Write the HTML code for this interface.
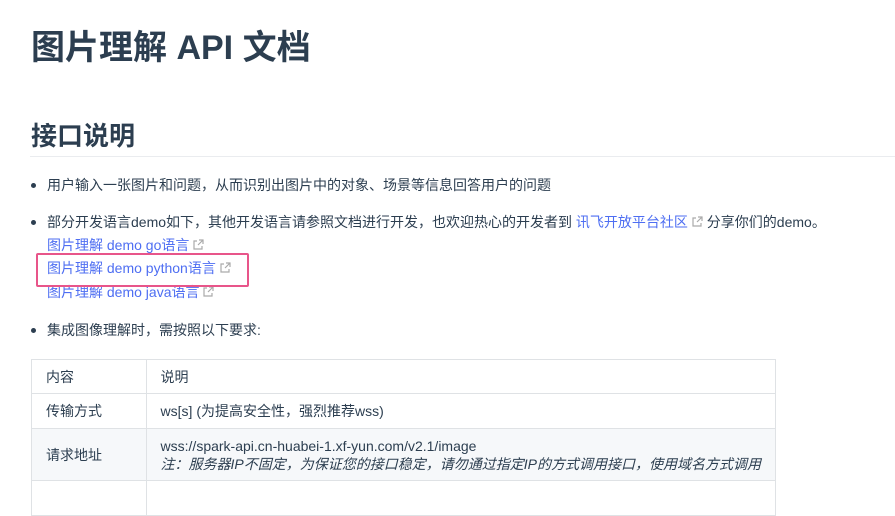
<!DOCTYPE html>
<html><head><meta charset="utf-8"><style>
body{margin:0;background:#fff;font-family:"Liberation Sans","Noto Sans CJK SC",sans-serif;color:#2c3e50;width:895px;height:487px;overflow:hidden;position:relative}
.a{position:absolute;white-space:nowrap}
h1{position:absolute;left:31px;top:26px;margin:0;font-size:34px;line-height:44px;font-weight:700}
h2{position:absolute;left:31px;top:118px;margin:0;font-size:26px;line-height:36px;font-weight:700}
.hr{position:absolute;left:30px;top:156px;width:865px;height:1px;background:#eaecef}
.t{font-size:14px;line-height:20px;color:#2c3e50}
.dot{position:absolute;width:5px;height:5px;border-radius:50%;background:#2c3e50}
.l{color:#4e6ef2}
.ext{display:inline-block;width:12px;height:12px;margin-left:3px;vertical-align:-1px}
table{position:absolute;left:31px;top:359px;border-collapse:collapse;width:745px;font-size:14px}
td{border:1px solid #dfe2e5;padding:0 14px;vertical-align:middle;color:#2c3e50;white-space:nowrap}
</style></head><body>
<svg width="0" height="0" style="position:absolute"><symbol id="e" viewBox="0 0 12 12"><path d="M5 2H2v8h8V7" fill="none" stroke="#aaa" stroke-width="1.2"/><path d="M7 1h4v4M11 1L6 6" fill="none" stroke="#aaa" stroke-width="1.2"/></symbol></svg>
<h1>图片理解 API 文档</h1>
<h2>接口说明</h2>
<div class="hr"></div>
<div class="dot" style="left:31px;top:183px"></div>
<div class="a t" style="left:47px;top:175px">用户输入一张图片和问题，从而识别出图片中的对象、场景等信息回答用户的问题</div>
<div class="dot" style="left:31px;top:220px"></div>
<div class="a t" style="left:47px;top:212px">部分开发语言demo如下，其他开发语言请参照文档进行开发，也欢迎热心的开发者到 <span class="l">讯飞开放平台社区</span><svg class="ext"><use href="#e"/></svg> 分享你们的demo。</div>
<div class="a t l" style="left:47px;top:235px">图片理解 demo go语言<svg class="ext"><use href="#e"/></svg></div>
<div class="a t l" style="left:47px;top:258px">图片理解 demo python语言<svg class="ext"><use href="#e"/></svg></div>
<div class="a t l" style="left:47px;top:282px">图片理解 demo java语言<svg class="ext"><use href="#e"/></svg></div>
<div class="a" style="left:36px;top:253px;width:209px;height:30px;border:2px solid #e8558a;border-radius:2px"></div>
<div class="dot" style="left:31px;top:328px"></div>
<div class="a t" style="left:47px;top:320px">集成图像理解时，需按照以下要求:</div>
<table>
<tr style="height:34px"><td style="width:88px">内容</td><td>说明</td></tr>
<tr style="height:35px"><td>传输方式</td><td>ws[s] (为提高安全性，强烈推荐wss)</td></tr>
<tr style="height:52px;background:#f6f8fa"><td>请求地址</td><td style="line-height:18px">wss://spark-api.cn-huabei-1.xf-yun.com/v2.1/image<br><i style="font-size:14px">注：服务器IP不固定，为保证您的接口稳定，请勿通过指定IP的方式调用接口，使用域名方式调用</i></td></tr>
<tr style="height:35px"><td></td><td></td></tr>
</table>
</body></html>
